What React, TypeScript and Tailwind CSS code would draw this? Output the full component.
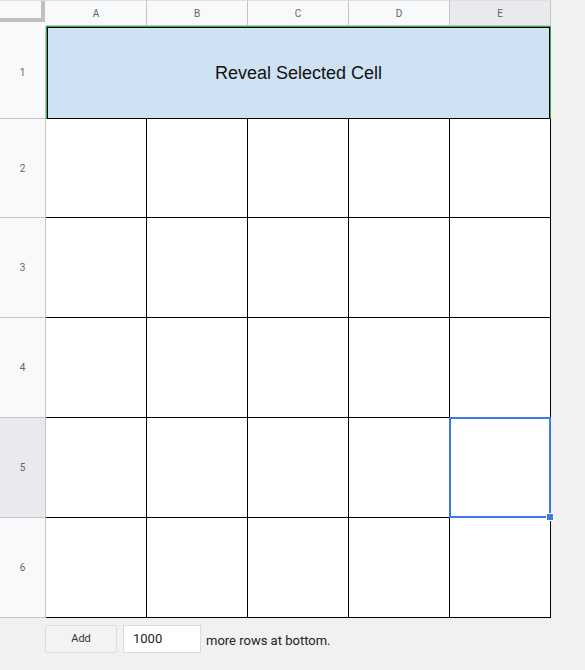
import React from "react"

const cols = ["A", "B", "C", "D", "E"]

const bodyRows = [
  { n: 2, h: "h-[99px]" },
  { n: 3, h: "h-[100px]" },
  { n: 4, h: "h-[100px]" },
  { n: 5, h: "h-[100px]" },
  { n: 6, h: "h-[100px]" },
]

function RowHeader({ n, h, active }: { n: number; h: string; active?: boolean }) {
  return (
    <div
      className={`${h} flex items-center justify-center border-b border-[#c4c4c4] text-[10px] text-[#666] ${
        active ? "bg-[#e8eaed]" : "bg-[#f8f9fa]"
      }`}
    >
      {n}
    </div>
  )
}

export default function App() {
  return (
    <div className="w-[585px] h-[670px] bg-[#f1f1f1] overflow-hidden font-['Roboto',sans-serif]">
      {/* column headers */}
      <div className="flex h-[26px]">
        <div className="w-[46px] h-[26px] bg-[#f8f9fa] border-t border-[#e0e0e0]">
          <div className="w-[45px] h-[21px] border-r-4 border-b-4 border-[#c0c0c0]" />
        </div>
        {cols.map((c) => (
          <div
            key={c}
            className={`w-[101px] h-[26px] flex items-center justify-center border-t border-r border-b border-t-[#e0e0e0] border-r-[#c4c4c4] border-b-[#c4c4c4] text-[10px] text-[#5f6368] ${
              c === "E" ? "bg-[#e8eaed]" : "bg-[#f8f9fa]"
            }`}
          >
            {c}
          </div>
        ))}
      </div>

      <div className="flex">
        {/* row headers */}
        <div className="w-[46px] border-r border-[#c4c4c4]">
          <RowHeader n={1} h="h-[93px]" />
          {bodyRows.map((r) => (
            <RowHeader key={r.n} n={r.n} h={r.h} active={r.n === 5} />
          ))}
        </div>

        {/* cells */}
        <div className="w-[505px] bg-white">
          <div className="h-[93px] flex border-l border-t border-r border-[#34a853]">
            <div className="flex-1 flex items-center justify-center border border-black bg-[#cfe2f3] font-['Liberation_Sans',Arial,sans-serif] text-[18px] text-[#111]">
              Reveal Selected Cell
            </div>
          </div>
          {bodyRows.map((r) => (
            <div key={r.n} className={`flex ${r.h}`}>
              {cols.map((c) => (
                <div key={c} className="relative w-[101px] border-r border-b border-black">
                  {r.n === 5 && c === "E" && (
                    <>
                      <div className="absolute -left-px -top-px -right-px -bottom-px border-2 border-[#3b7be6]" />
                      <div className="absolute -right-[4px] -bottom-[4px] w-[8px] h-[8px] bg-[#3b7be6] border border-white z-10" />
                    </>
                  )}
                </div>
              ))}
            </div>
          ))}
        </div>
      </div>

      {/* add rows bar */}
      <div className="flex items-center pl-[45px] pt-[7px]">
        <button className="w-[72px] h-[28px] rounded-[2px] border border-[#dcdcdc] bg-[#f3f3f3] text-[11px] text-[#333]">
          Add
        </button>
        <div className="ml-[6px] w-[78px] h-[28px] border border-[#dadada] bg-white pl-[9px] flex items-center text-[13px] text-[#222]">
          1000
        </div>
        <span className="ml-[5px] pt-[3px] text-[13px] text-[#222]">more rows at bottom.</span>
      </div>
    </div>
  )
}
